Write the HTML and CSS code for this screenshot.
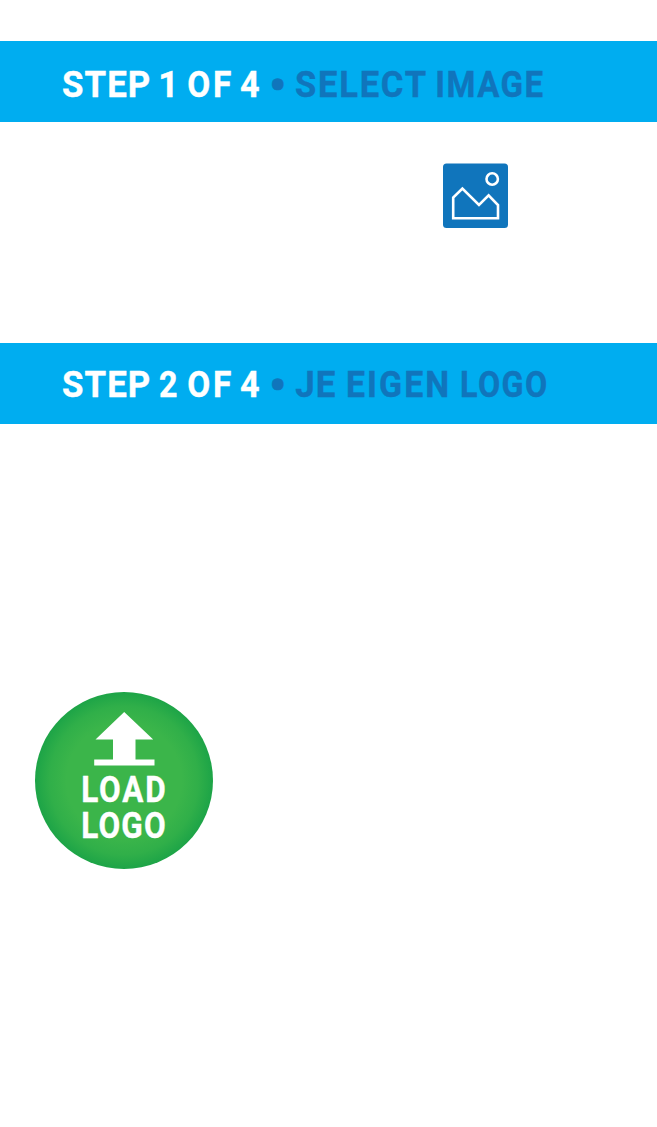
FILE: index.html
```html
<!DOCTYPE html>
<html lang="en">
<head>
<meta charset="utf-8">
<title>Steps</title>
<link rel="stylesheet" href="styles.css">
</head>
<body>
<main class="page">
  <section class="step step-image">
    <h2 class="bar">
      <svg class="title" width="657" height="81" viewBox="0 0 657 81">
        <g class="count">
          <text transform="translate(62 55.7) scale(.93 1)" textLength="95">STEP</text>
          <text transform="translate(158.3 55.7) scale(.95 1)">1</text>
          <text transform="translate(187.3 55.7) scale(.89 1)" textLength="49.5">OF</text>
          <text transform="translate(240 55.7) scale(.91 1)">4</text>
        </g>
        <g class="name">
          <text class="dot" x="269" y="60.7">•</text>
          <text transform="translate(295 55.7) scale(.92 1)" textLength="142.5">SELECT</text>
          <text transform="translate(435.3 55.7) scale(.88 1)" textLength="122.5">IMAGE</text>
        </g>
      </svg>
    </h2>
    <svg class="picture" width="65" height="65" viewBox="0 0 65 65">
      <rect y=".5" width="65" height="64.5" rx="3.5" fill="#1075bc"/>
      <path d="M10.2 55.2V34.5L19.4 25.5L36 42L45.6 32.3L55 42V55.2Z" fill="none" stroke="#fff" stroke-width="2.6"/>
      <circle cx="49.2" cy="16" r="5.7" fill="none" stroke="#fff" stroke-width="2.6"/>
    </svg>
  </section>
  <section class="step">
    <h2 class="bar">
      <svg class="title" width="657" height="81" viewBox="0 0 657 81">
        <g class="count">
          <text transform="translate(62 53.7) scale(.93 1)" textLength="95">STEP</text>
          <text transform="translate(159 53.7) scale(.86 1)">2</text>
          <text transform="translate(187.3 53.7) scale(.89 1)" textLength="49.5">OF</text>
          <text transform="translate(240 53.7) scale(.91 1)">4</text>
        </g>
        <g class="name">
          <text class="dot" x="269" y="58.7">•</text>
          <text transform="translate(295.3 53.7) scale(.93 1)" textLength="43">JE</text>
          <text transform="translate(346 53.7) scale(.9 1)" textLength="114.5">EIGEN</text>
          <text transform="translate(460 53.7) scale(.86 1)" textLength="101.5">LOGO</text>
        </g>
      </svg>
    </h2>
    <button class="load" type="button">
      <svg width="178" height="177" viewBox="0 0 178 177">
        <path d="M89.2 20L118.2 47.5H100.5V67.5H119.5V73.5H59.2V67.5H78V47.5H60.5Z" fill="#fff"/>
        <g class="load-label">
          <text transform="translate(46.3 109.7) scale(.84 1)" textLength="100.5">LOAD</text>
          <text transform="translate(46.3 145.7) scale(.84 1)" textLength="100.5">LOGO</text>
        </g>
      </svg>
    </button>
  </section>
</main>
</body>
</html>
```
FILE: styles.css
```css
body {
  margin: 0;
  background: #fff;
}
.page {
  box-sizing: border-box;
  height: 1127px;
  padding-top: 41px;
}
.step {
  display: flex;
  flex-direction: column;
}
.step-image {
  height: 302px;
}
.bar {
  height: 81px;
  margin: 0;
  background: #00adf0;
}
.title {
  display: block;
}
.title text,
.load-label text {
  font-family: Roboto, "Liberation Sans", sans-serif;
  font-size: 37.5px;
  font-weight: 700;
}
.title .dot {
  font-size: 48px;
}
.count,
.load-label {
  fill: #fff;
  stroke: #fff;
  stroke-width: .4px;
}
.name {
  fill: #1075bc;
  stroke: #1075bc;
  stroke-width: .4px;
}
.picture {
  margin: 41px 0 0 443px;
}
.load {
  width: 178px;
  height: 177px;
  margin: 268px 0 0 35px;
  padding: 0;
  border: 0;
  border-radius: 50%;
  background: radial-gradient(circle closest-side, #3bb54a 0%, #3bb54a 65%, #30af49 84%, #1da447 100%);
}
.load svg {
  display: block;
}
```
